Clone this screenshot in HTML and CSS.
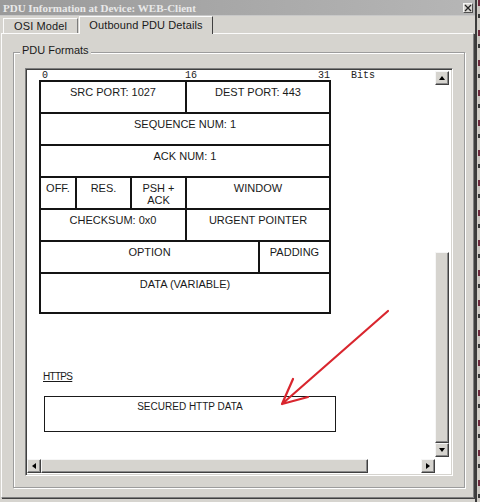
FILE: index.html
```html
<!DOCTYPE html>
<html>
<head>
<meta charset="utf-8">
<link rel="stylesheet" href="styles.css">
</head>
<body>
<div class="screen">
  <div class="window">
    <div class="titlebar">
      <span class="title">PDU Information at Device: WEB-Client</span>
      <span class="close"><svg width="8" height="8" viewBox="0 0 8 8"><path d="M1 1L7 7M7 1L1 7" stroke="#222" stroke-width="1.3"/></svg></span>
    </div>
    <div class="tabs">
      <div class="tab">OSI Model</div>
      <div class="tab active">Outbound PDU Details</div>
    </div>
    <div class="pane">
      <div class="group">
        <span class="legend">PDU Formats</span>
        <div class="panel">
          <div class="upper">
            <div class="viewport">
              <div class="bits">
                <span class="b0">0</span><span class="b16">16</span><span class="b31">31</span><span>Bits</span>
              </div>
              <div class="pdu">
                <div class="row">
                  <div class="cell w144">SRC PORT: 1027</div>
                  <div class="cell fill">DEST PORT: 443</div>
                </div>
                <div class="row">
                  <div class="cell fill first">SEQUENCE NUM: 1</div>
                </div>
                <div class="row">
                  <div class="cell fill first">ACK NUM: 1</div>
                </div>
                <div class="row">
                  <div class="cell w34">OFF.</div>
                  <div class="cell w53">RES.</div>
                  <div class="cell w53">PSH +<br>ACK</div>
                  <div class="cell fill">WINDOW</div>
                </div>
                <div class="row">
                  <div class="cell w144">CHECKSUM: 0x0</div>
                  <div class="cell fill">URGENT POINTER</div>
                </div>
                <div class="row">
                  <div class="cell w217">OPTION</div>
                  <div class="cell fill">PADDING</div>
                </div>
                <div class="row last">
                  <div class="cell fill first">DATA (VARIABLE)</div>
                </div>
              </div>
              <div class="https">HTTPS</div>
              <div class="databox">SECURED HTTP DATA</div>
            </div>
            <div class="vscroll">
              <div class="btn"><span class="tri up"></span></div>
              <div class="track"></div>
              <div class="thumb vthumb"></div>
              <div class="btn"><span class="tri down"></span></div>
            </div>
          </div>
          <div class="hscroll">
            <div class="btn"><span class="tri left"></span></div>
            <div class="thumb hthumb"></div>
            <div class="track"></div>
            <div class="btn"><span class="tri right"></span></div>
          </div>
        </div>
      </div>
    </div>
  </div>
  <div class="edge"></div>
  <svg class="arrow" width="480" height="502" viewBox="0 0 480 502">
    <path d="M388 311 L282 404 M282 404 L293 379 M282 404 L308 397" fill="none" stroke="#d9262e" stroke-width="2.2" stroke-linecap="round" stroke-linejoin="round"/>
  </svg>
</div>
</body>
</html>
```
FILE: styles.css
```css
* { box-sizing: border-box; }
html, body { margin: 0; padding: 0; }
body {
  font-family: "Liberation Sans", Arial, sans-serif;
  font-size: 11px;
  color: #1a1a1a;
  background: #d4d2cd;
}
.screen {
  width: 480px;
  height: 502px;
  display: flex;
  position: relative;
  overflow: hidden;
  background: #d4d2cd;
}
.window {
  width: 475px;
  height: 502px;
  display: flex;
  flex-direction: column;
  background: #d6d4cf;
}
.titlebar {
  height: 16px;
  display: flex;
  align-items: center;
  justify-content: space-between;
  padding: 0 1px 0 3px;
  background: linear-gradient(90deg, #9a9a9a 0%, #a8a8a8 50%, #b6b6b6 100%);
  border-bottom: 1px solid #c8c8c8;
}
.title {
  font-family: "Liberation Serif", "Times New Roman", serif;
  font-weight: bold;
  font-size: 11px;
  color: #e9e9e9;
  line-height: 14px;
}
.close {
  width: 10px;
  height: 10px;
  display: flex;
  align-items: center;
  justify-content: center;
  background: #d8d6d2;
  border: 1px solid;
  border-color: #f4f4f4 #505050 #505050 #f4f4f4;
  margin-right: 1px;
}
.tabs {
  height: 17px;
  display: flex;
  align-items: flex-end;
  padding-left: 3px;
  position: relative;
  z-index: 1;
}
.tab {
  height: 15px;
  width: 75px;
  border: 1px solid;
  border-bottom: none;
  border-color: #fbfbfb #7c7c7c #7c7c7c #fbfbfb;
  text-align: center;
  line-height: 13px;
  font-size: 11px;
  letter-spacing: 0.1px;
  padding-top: 1px;
}
.tab.active {
  width: 134px;
  height: 18px;
  margin-left: 1px;
  margin-bottom: -1px;
  background: #d6d4cf;
  border-color: #fbfbfb #404040 #404040 #fbfbfb;
  padding-top: 2px;
}
.pane {
  margin-left: 1px;
  width: 473px;
  height: 465px;
  border: 1px solid;
  border-color: #fbfbfb #808080 #808080 #fbfbfb;
  box-shadow: 1px 1px 0 #404040;
  padding: 18px 0 0 11px;
}
.group {
  position: relative;
  width: 452px;
  height: 436px;
  border: 1px solid #9c9c9c;
  box-shadow: inset 1px 1px 0 #ffffff, 1px 1px 0 #ffffff;
  padding: 15px 11px 11px 11px;
}
.legend {
  position: absolute;
  top: -9px;
  left: 6px;
  padding: 0 2px;
  background: #d6d4cf;
  line-height: 13px;
  font-size: 11px;
}
.panel {
  width: 428px;
  height: 408px;
  background: #ffffff;
  border: 1px solid;
  border-color: #808080 #ffffff #ffffff #808080;
  box-shadow: inset 1px 1px 0 #404040, inset -1px -1px 0 #d6d4cf;
  padding: 1px;
  display: flex;
  flex-direction: column;
}
.upper {
  height: 389px;
  display: flex;
}
.viewport {
  width: 408px;
  height: 389px;
  overflow: hidden;
  display: flex;
  flex-direction: column;
}
.bits {
  height: 10px;
  display: flex;
  padding-left: 15px;
  padding-top: 1px;
  font-family: "Liberation Mono", "Courier New", monospace;
  font-size: 10px;
  line-height: 9px;
  color: #222;
}
.b0 { width: 143px; }
.b16 { width: 133px; }
.b31 { width: 33px; }
.pdu {
  margin-left: 12px;
  width: 292px;
  border: 2px solid #141414;
}
.row {
  display: flex;
  height: 32px;
  border-top: 2px solid #141414;
}
.row:first-child {
  height: 30px;
  border-top: none;
}
.row.last { height: 40px; }
.cell {
  text-align: center;
  padding-top: 4px;
  line-height: 12px;
  font-size: 11px;
  border-left: 2px solid #141414;
}
.cell:first-child { border-left: none; }
.w144 { width: 144px; }
.w34 { width: 34px; }
.w53 { width: 55px; }
.w217 { width: 217px; }
.fill { flex: 1; }
.https {
  margin-top: 57px;
  margin-left: 16px;
  font-size: 10px;
  line-height: 12px;
  letter-spacing: -0.7px;
  text-decoration: underline;
}
.databox {
  margin-top: 13px;
  margin-left: 17px;
  width: 292px;
  height: 36px;
  border: 1px solid #1a1a1a;
  text-align: center;
  font-size: 10px;
  line-height: 12px;
  padding-top: 4px;
}
.vscroll {
  width: 14px;
  margin: 1px 2px 2px 0;
  display: flex;
  flex-direction: column;
}
.hscroll {
  height: 14px;
  width: 408px;
  display: flex;
}
.btn, .thumb {
  background: #d6d4cf;
  border: 1px solid;
  border-color: #f6f6f6 #404040 #404040 #f6f6f6;
  box-shadow: inset -1px -1px 0 #8a8a8a;
}
.btn {
  width: 14px;
  height: 14px;
  flex: none;
  display: flex;
  align-items: center;
  justify-content: center;
}
.track { flex: 1; background: #ffffff; }
.vthumb { height: 191px; flex: none; }
.hthumb { width: 327px; flex: none; }
.tri { width: 0; height: 0; border-style: solid; }
.tri.up { border-width: 0 3.5px 4px 3.5px; border-color: transparent transparent #000 transparent; margin-bottom: 1px; }
.tri.down { border-width: 4px 3.5px 0 3.5px; border-color: #000 transparent transparent transparent; }
.tri.left { border-width: 3.5px 4px 3.5px 0; border-color: transparent #000 transparent transparent; margin-right: 1px; }
.tri.right { border-width: 3.5px 0 3.5px 4px; border-color: transparent transparent transparent #000; }
.edge {
  width: 5px;
  height: 502px;
  background:
    repeating-linear-gradient(180deg, #6e2b3e 0 6px, #c9c6c0 6px 14px, #3a3a3a 14px 18px, #d0cdc7 18px 30px) right / 2px 100% no-repeat,
    linear-gradient(90deg, #3c3c3c 0 2px, #cfccc6 2px);
}
.arrow {
  position: absolute;
  left: 0;
  top: 0;
  pointer-events: none;
}
```
